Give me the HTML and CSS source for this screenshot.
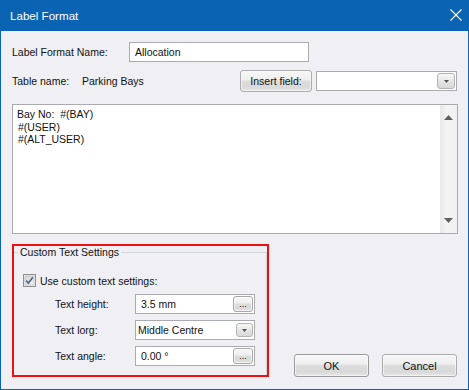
FILE: index.html
```html
<!DOCTYPE html>
<html lang="en">
  <head>
    <meta charset="UTF-8" />
    <title>Label Format</title>
    <link rel="stylesheet" href="styles.css">
  </head>
  <body>
    <div class="window">
      <div class="titlebar">
        <span class="title">Label Format</span>
        <svg class="close" width="12" height="12" viewBox="0 0 12 12">
          <path d="M0.5 0.5 L11.5 11.5 M11.5 0.5 L0.5 11.5" stroke="#fff" stroke-width="1.1" fill="none" />
        </svg>
      </div>

      <div class="content">
        <div class="row name-row">
          <span class="label name-label">Label Format Name:</span>
          <div class="input name-input">Allocation</div>
        </div>

        <div class="row table-row">
          <span class="label table-label">Table name:</span>
          <span class="label">Parking Bays</span>
          <button class="button insert-button">Insert field:</button>
          <div class="input combo field-combo">
            <span class="combo-text"></span>
            <span class="drop-button">
              <svg width="5" height="3" viewBox="0 0 5 3"><path d="M0 0 H5 L2.5 3 Z" fill="#555" /></svg>
            </span>
          </div>
        </div>

        <div class="editor">
          <div class="editor-text">
            <div>Bay No:&nbsp; #(BAY)</div>
            <div>&#8202;#(USER)</div>
            <div>&#8202;#(ALT_USER)</div>
          </div>
          <div class="scrollbar">
            <svg width="9" height="5" viewBox="0 0 9 5"><path d="M0 5 H9 L4.5 0 Z" fill="#606060" /></svg>
            <svg width="9" height="5" viewBox="0 0 9 5"><path d="M0 0 H9 L4.5 5 Z" fill="#606060" /></svg>
          </div>
        </div>

        <div class="bottom">
          <div class="highlight">
            <fieldset class="group">
              <legend>Custom Text Settings</legend>
              <div class="group-body">
                <div class="check-row">
                  <svg class="checkbox" width="13" height="13" viewBox="0 0 13 13">
                    <defs>
                      <linearGradient id="cb" x1="0" y1="0" x2="1" y2="1">
                        <stop offset="0" stop-color="#d4d4d4" />
                        <stop offset="1" stop-color="#f7f7f7" />
                      </linearGradient>
                    </defs>
                    <rect x="0.5" y="0.5" width="12" height="12" fill="#f4f4f4" stroke="#8f8f8f" />
                    <rect x="2" y="2" width="9" height="9" fill="url(#cb)" stroke="#aeaeae" stroke-width="0.6" />
                    <path d="M3.3 6.4 L5.4 9.2 L9.8 3.2" stroke="#4d6185" stroke-width="1.6" fill="none" />
                  </svg>
                  <span class="label">Use custom text settings:</span>
                </div>

                <div class="field-row">
                  <span class="label field-label">Text height:</span>
                  <div class="input field-input">
                    <span class="input-text">3.5 mm</span>
                    <button class="button dots">...</button>
                  </div>
                </div>

                <div class="field-row">
                  <span class="label field-label">Text lorg:</span>
                  <div class="input field-input combo-input">
                    <span class="input-text">Middle Centre</span>
                    <span class="drop-button small-drop">
                      <svg width="5" height="3" viewBox="0 0 5 3"><path d="M0 0 H5 L2.5 3 Z" fill="#555" /></svg>
                    </span>
                  </div>
                </div>

                <div class="field-row">
                  <span class="label field-label">Text angle:</span>
                  <div class="input field-input">
                    <span class="input-text">0.00 °</span>
                    <button class="button dots">...</button>
                  </div>
                </div>
              </div>
            </fieldset>
          </div>

          <div class="actions">
            <button class="button action default">OK</button>
            <button class="button action">Cancel</button>
          </div>
        </div>
      </div>
    </div>
  </body>
</html>
```

FILE: styles.css
```css
* {
  box-sizing: border-box;
}

body {
  margin: 0;
  font-family: "Liberation Sans", Arial, sans-serif;
  font-size: 10.5px;
  color: #111;
}

.window {
  width: 469px;
  height: 390px;
  background: #efeff4;
  border: 1px solid #0b63b4;
  border-top: none;
  display: flex;
  flex-direction: column;
}

.titlebar {
  height: 31px;
  background: #0b63b4;
  color: #fff;
  display: flex;
  align-items: center;
  justify-content: space-between;
  padding: 0 6px 1px 9px;
  flex-shrink: 0;
}

.title {
  font-size: 11.6px;
}

.close {
  margin-bottom: 1px;
}

.content {
  padding: 11px 10px 0 11px;
  display: flex;
  flex-direction: column;
}

.row {
  display: flex;
  align-items: center;
}

.label {
  white-space: nowrap;
}

.input {
  background: #fff;
  border: 1px solid #a9abb0;
  height: 20px;
  display: flex;
  align-items: center;
}

/* top rows */
.name-row {
  height: 20px;
}

.name-label {
  width: 117px;
}

.name-input {
  width: 180px;
  padding-left: 5px;
}

.table-row {
  height: 22px;
  margin-top: 8px;
}

.table-label {
  width: 70px;
}

.button {
  font-family: inherit;
  font-size: 10.5px;
  color: #111;
  border: 1px solid #acacac;
  border-radius: 3px;
  background: linear-gradient(#f7f7f7 0%, #efefef 42%, #dcdcdc 52%, #d9d9d9 80%, #e6e6e6 100%);
  box-shadow: inset 0 0 0 1px rgba(255, 255, 255, 0.55);
  padding: 0;
}

.insert-button {
  margin-left: auto;
  width: 72px;
  height: 22px;
}

.field-combo {
  width: 141px;
  margin-left: 4px;
  margin-right: 1px;
  justify-content: flex-end;
  padding-right: 1px;
}

.drop-button {
  width: 18px;
  height: 16px;
  border: 1px solid #b4b4b4;
  border-radius: 3px;
  background: linear-gradient(#f8f8f8, #e4e4e4 55%, #d8d8d8);
  display: flex;
  align-items: center;
  justify-content: center;
}

/* text editor */
.editor {
  margin-top: 12px;
  height: 130px;
  background: #fff;
  border: 1px solid #a9abb0;
  display: flex;
}

.editor-text {
  flex: 1;
  padding: 3px 0 0 4px;
  line-height: 12.7px;
}

.scrollbar {
  width: 17px;
  background: linear-gradient(90deg, #e8e8e8, #f4f4f4 40%, #f0f0f0);
  display: flex;
  flex-direction: column;
  align-items: center;
  justify-content: space-between;
  padding: 10px 0 10px;
}

/* custom text settings */
.bottom {
  margin-top: 10px;
  display: flex;
}

.highlight {
  width: 257px;
  height: 133px;
  border: 2px solid #ee1111;
}

.group {
  margin: 0;
  padding: 0;
  height: 100%;
  border: 1px solid #d3d7dc;
  border-left: none;
  border-bottom: none;
}

.group legend {
  margin-left: 4px;
  padding: 0 2px;
  line-height: 13px;
}

.group-body {
  padding: 15px 0 0 9px;
}

.check-row {
  display: flex;
  align-items: center;
  gap: 4px;
  height: 13px;
}

.field-row {
  display: flex;
  align-items: center;
  margin-top: 6px;
  padding-left: 32px;
}

.check-row + .field-row {
  margin-top: 7px;
}

.field-label {
  width: 80px;
}

.field-input {
  width: 120px;
  justify-content: space-between;
  padding: 0 1px 0 5px;
}

.combo-input {
  padding-left: 2px;
}

.dots {
  width: 20px;
  height: 16px;
  font-size: 9px;
  line-height: 12px;
  border-color: #a8a8a8;
}

.small-drop {
  width: 17px;
  height: 14px;
}

/* dialog buttons */
.actions {
  margin-left: auto;
  margin-right: 1px;
  align-self: flex-end;
  display: flex;
  gap: 13px;
}

.action {
  width: 75px;
  height: 23px;
  font-size: 11px;
}

.default {
  border-color: #9a9a9a;
}
```
